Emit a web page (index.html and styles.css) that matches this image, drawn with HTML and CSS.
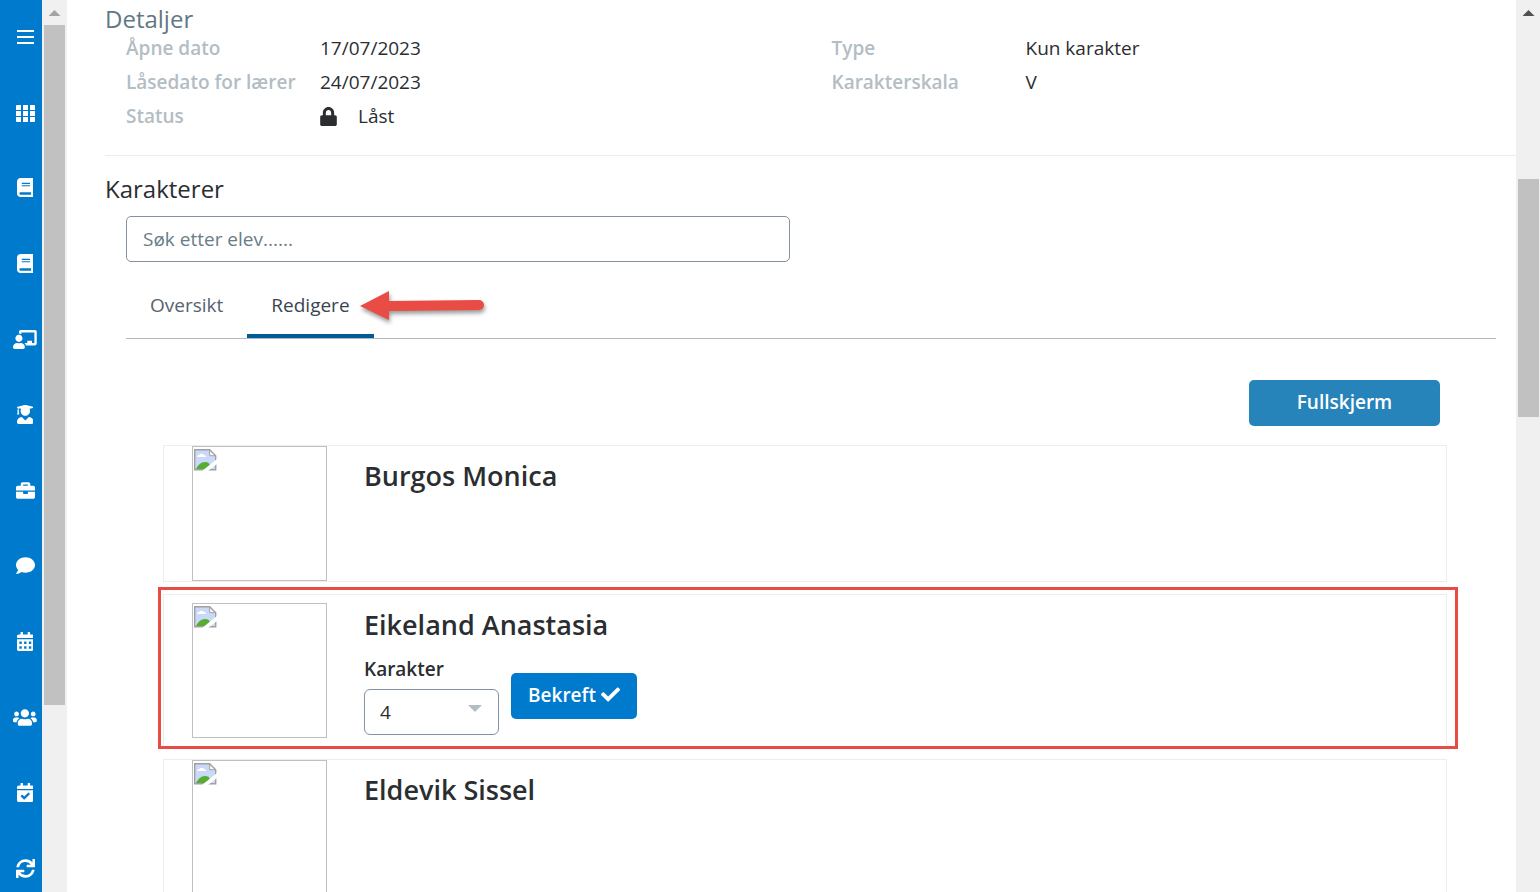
FILE: index.html
```
<!DOCTYPE html>
<html lang="no">
<head>
    <meta charset="UTF-8">
    <meta name="viewport" content="width=device-width, initial-scale=1.0">
    <title>Karakterer</title>
    <link rel="stylesheet" href="styles.css">
</head>
<body>
    <!-- Shared icons -->
    <svg class="sprite" aria-hidden="true">
        <symbol id="book" viewBox="0 0 448 512"><path d="M448 360V24c0-13.300-10.700-24-24-24H96C43 0 0 43 0 96v320c0 53 43 96 96 96h328c13.300 0 24-10.700 24-24v-16c0-7.500-3.500-14.300-8.900-18.700-4.200-15.400-4.200-59.300 0-74.700 5.400-4.300 8.900-11.100 8.900-18.600zM128 134c0-3.300 2.700-6 6-6h212c3.300 0 6 2.700 6 6v20c0 3.300-2.700 6-6 6H134c-3.300 0-6-2.700-6-6v-20zm0 64c0-3.300 2.700-6 6-6h212c3.300 0 6 2.700 6 6v20c0 3.300-2.700 6-6 6H134c-3.300 0-6-2.700-6-6v-20zm253.400 250H96c-17.700 0-32-14.300-32-32 0-17.600 14.400-32 32-32h285.400c-1.900 17.100-1.900 46.900 0 64z"/></symbol>
        <symbol id="missing" viewBox="0 0 24 24">
            <path d="M0.700 1.700h15l6 6v14h-21z" fill="#c9daf8"/>
            <path d="M3 9a2 2 0 0 1 2-2 3 3 0 0 1 5 0 2 2 0 0 1 2 2z" fill="#fff"/>
            <path d="M2 21c2-4 5-7 9-7 3 0 4 1 5 3l-3 4z" fill="#56ad32"/>
            <path d="M15.700 1.700v6h6" fill="#fff"/>
            <path d="M0.700 21.700v-20h15l6 6v14z" fill="none" stroke="#a0a0a0" stroke-width="1.400"/>
            <path d="M15.700 1.700v6h6" fill="none" stroke="#a0a0a0" stroke-width="1"/>
            <path d="M8 23 23 11v5l-9 7z" fill="#fff"/>
        </symbol>
    </svg>

    <div class="app">
        <nav class="sidebar" aria-label="Hovedmeny">
            <button type="button" aria-label="Meny"><svg viewBox="0 0 17 19"><path d="M0 3h17v2H0zM0 9h17v2H0zM0 15h17v2H0z"/></svg></button>
            <a href="#" aria-label="Oversikt"><svg viewBox="0 0 19 19"><path d="M1 2h4v5H0V3a1 1 0 0 1 1-1zM7 2h5v5H7zM14 2h4a1 1 0 0 1 1 1v4h-5zM0 8h5v5H0zM7 8h5v5H7zM14 8h5v5h-5zM0 14h5v5H1a1 1 0 0 1-1-1zM7 14h5v5H7zM14 14h5v4a1 1 0 0 1-1 1h-4z"/></svg></a>
            <a href="#" aria-label="Fag"><svg viewBox="0 0 448 512"><use href="#book"/></svg></a>
            <a href="#" aria-label="Bøker"><svg viewBox="0 0 448 512"><use href="#book"/></svg></a>
            <a href="#" aria-label="Undervisning"><svg viewBox="0 0 640 512"><path d="M208 352c-2.390 0-4.780.35-7.060 1.090C187.980 357.300 174.350 360 160 360c-14.350 0-27.980-2.700-40.950-6.910-2.280-.74-4.660-1.090-7.050-1.090C49.940 352-.33 402.480 0 464.620.14 490.880 21.730 512 48 512h224c26.270 0 47.860-21.120 48-47.380.33-62.140-49.940-112.620-112-112.620zm-48-32c53.020 0 96-42.980 96-96s-42.980-96-96-96-96 42.980-96 96 42.980 96 96 96zM592 0H208c-26.470 0-48 22.250-48 49.590V96c23.420 0 45.100 6.780 64 17.800V64h352v288h-64v-64H384v64h-76.240c19.100 16.690 33.120 38.730 39.690 64H592c26.470 0 48-22.250 48-49.590V49.590C640 22.250 618.470 0 592 0z"/></svg></a>
            <a href="#" aria-label="Elever"><svg viewBox="0 0 448 512"><path d="M319.400 320.600L224 416l-95.400-95.400C57.100 323.700 0 382.200 0 454.400v9.600c0 26.500 21.500 48 48 48h352c26.500 0 48-21.500 48-48v-9.600c0-72.200-57.100-130.700-128.600-133.800zM13.600 79.800l6.400 1.500v58.400c-7 4.200-12 11.500-12 20.300 0 8.400 4.600 15.400 11.100 19.700L3.500 242c-1.700 6.900 2.100 14 7.600 14h41.800c5.500 0 9.300-7.100 7.600-14l-15.600-62.300C51.400 175.400 56 168.400 56 160c0-8.800-5-16.100-12-20.300V87.100l66 15.900c-8.600 17.200-14 36.400-14 57 0 70.700 57.300 128 128 128s128-57.300 128-128c0-20.600-5.300-39.800-14-57l96.300-23.200c18.200-4.400 18.200-27.100 0-31.500l-190.400-46c-13-3.100-26.700-3.100-39.700 0L13.600 48.200c-18.100 4.400-18.100 27.200 0 31.600z"/></svg></a>
            <a href="#" aria-label="Arbeid"><svg viewBox="0 0 512 512"><path d="M320 336c0 8.840-7.160 16-16 16h-96c-8.840 0-16-7.160-16-16v-48H0v144c0 25.600 22.400 48 48 48h416c25.600 0 48-22.400 48-48V288H320v48zm144-208h-80V80c0-25.600-22.400-48-48-48H176c-25.600 0-48 22.400-48 48v48H48c-25.600 0-48 22.400-48 48v80h512v-80c0-25.600-22.400-48-48-48zm-144 0H192V96h128v32z"/></svg></a>
            <a href="#" aria-label="Meldinger"><svg viewBox="0 0 512 512"><path d="M256 32C114.600 32 0 125.100 0 240c0 49.600 21.400 95 57 130.700C44.500 421.100 2.700 466 2.200 466.500c-2.200 2.300-2.800 5.700-1.500 8.700S4.800 480 8 480c66.300 0 116-31.800 140.600-51.400 32.700 12.300 69 19.400 107.400 19.400 141.400 0 256-93.100 256-208S397.400 32 256 32z"/></svg></a>
            <a href="#" aria-label="Kalender"><svg viewBox="0 0 448 512"><path fill-rule="evenodd" d="M436 160H12c-7 0-12-5-12-12v-36c0-27 21-48 48-48h48V12c0-7 5-12 12-12h40c7 0 12 5 12 12v52h128V12c0-7 5-12 12-12h40c7 0 12 5 12 12v52h48c27 0 48 21 48 48v36c0 7-5 12-12 12zM12 192h424c7 0 12 5 12 12v260c0 27-21 48-48 48H48c-27 0-48-21-48-48V204c0-7 5-12 12-12zM64 256v64h64v-64zM192 256v64h64v-64zM320 256v64h64v-64zM64 384v64h64v-64zM192 384v64h64v-64zM320 384v64h64v-64z"/></svg></a>
            <a href="#" aria-label="Grupper"><svg viewBox="0 0 640 512"><path d="M96 224c35.300 0 64-28.700 64-64s-28.700-64-64-64-64 28.700-64 64 28.700 64 64 64zm448 0c35.300 0 64-28.700 64-64s-28.700-64-64-64-64 28.700-64 64 28.700 64 64 64zm32 32h-64c-17.600 0-33.500 7.100-45.100 18.600 40.300 22.100 68.900 62 75.100 109.400h66c17.700 0 32-14.300 32-32v-32c0-35.300-28.700-64-64-64zm-256 0c61.900 0 112-50.100 112-112S381.900 32 320 32 208 82.100 208 144s50.100 112 112 112zm76.800 32h-8.300c-20.800 10-43.900 16-68.500 16s-47.600-6-68.500-16h-8.300C179.600 288 128 339.600 128 403.200V432c0 26.500 21.500 48 48 48h288c26.500 0 48-21.500 48-48v-28.800c0-63.600-51.600-115.200-115.200-115.200zm-223.700-13.400C161.500 263.100 145.600 256 128 256H64c-35.300 0-64 28.700-64 64v32c0 17.700 14.300 32 32 32h65.900c6.300-47.400 34.900-87.300 75.200-109.400z"/></svg></a>
            <a href="#" aria-label="Fravær"><svg viewBox="0 0 448 512"><path d="M436 160H12c-6.627 0-12-5.373-12-12v-36c0-26.510 21.490-48 48-48h48V12c0-6.627 5.373-12 12-12h40c6.627 0 12 5.373 12 12v52h128V12c0-6.627 5.373-12 12-12h40c6.627 0 12 5.373 12 12v52h48c26.510 0 48 21.490 48 48v36c0 6.627-5.373 12-12 12zM12 192h424c6.627 0 12 5.373 12 12v260c0 26.510-21.490 48-48 48H48c-26.510 0-48-21.490-48-48V204c0-6.627 5.373-12 12-12zm333.296 95.947l-28.169-28.398c-4.667-4.705-12.265-4.736-16.970-.068L194.120 364.665l-45.980-46.352c-4.667-4.705-12.266-4.736-16.971-.068l-28.397 28.170c-4.705 4.667-4.736 12.265-.068 16.970l82.601 83.269c4.667 4.705 12.265 4.736 16.970.068l142.953-141.805c4.705-4.667 4.736-12.265.068-16.970z"/></svg></a>
            <a href="#" aria-label="Oppdater"><svg viewBox="0 0 512 512"><path d="M440.650 12.570l4 82.770A247.160 247.160 0 0 0 255.830 8C134.730 8 33.910 94.920 12.290 209.820A12 12 0 0 0 24.090 224h49.050a12 12 0 0 0 11.670-9.260 175.910 175.910 0 0 1 317-56.940l-101.460-4.860a12 12 0 0 0-12.570 12v47.410a12 12 0 0 0 12 12H500a12 12 0 0 0 12-12V12a12 12 0 0 0-12-12h-47.370a12 12 0 0 0-11.980 12.570zM255.830 432a175.610 175.610 0 0 1-146-77.800l101.800 4.870a12 12 0 0 0 12.570-12v-47.400a12 12 0 0 0-12-12H12a12 12 0 0 0-12 12V500a12 12 0 0 0 12 12h47.350a12 12 0 0 0 12-12.600l-4.150-82.570A247.170 247.170 0 0 0 255.830 504c121.110 0 221.930-86.920 243.550-201.820a12 12 0 0 0-11.800-14.180h-49.050a12 12 0 0 0-11.670 9.260A175.860 175.860 0 0 1 255.830 432z"/></svg></a>
        </nav>

        <div class="scrollbar scrollbar-menu" aria-hidden="true">
            <div class="scroll-arrow"></div>
            <div class="scroll-thumb"></div>
        </div>

        <main class="content">
            <section class="details">
                <h2>Detaljer</h2>
                <div class="detail-columns">
                    <dl>
                        <dt>Åpne dato</dt>
                        <dd>17/07/2023</dd>
                        <dt>Låsedato for lærer</dt>
                        <dd>24/07/2023</dd>
                        <dt>Status</dt>
                        <dd class="status">
                            <svg viewBox="0 0 448 512"><path d="M400 224h-24v-72C376 68.200 307.800 0 224 0S72 68.200 72 152v72H48c-26.500 0-48 21.500-48 48v192c0 26.500 21.500 48 48 48h352c26.500 0 48-21.500 48-48V272c0-26.500-21.500-48-48-48zm-104 0H152v-72c0-39.700 32.300-72 72-72s72 32.300 72 72v72z"/></svg>
                            Låst
                        </dd>
                    </dl>
                    <dl>
                        <dt>Type</dt>
                        <dd>Kun karakter</dd>
                        <dt>Karakterskala</dt>
                        <dd>V</dd>
                    </dl>
                </div>
            </section>

            <section class="grades">
                <h2>Karakterer</h2>
                <div class="grades-body">
                    <input class="search" type="text" placeholder="Søk etter elev......" aria-label="Søk etter elev">

                    <div class="tabs" role="tablist">
                        <button class="tab" type="button" role="tab" aria-selected="false">Oversikt</button>
                        <button class="tab active" type="button" role="tab" aria-selected="true">Redigere</button>
                        <svg class="pointer" viewBox="0 0 124 32" aria-hidden="true"><path d="M0 16 29 1v10l90-1a5 5 0 0 1 0 10l-90 1v9z"/></svg>
                    </div>

                    <div class="panel">
                        <button class="btn btn-fullscreen" type="button">Fullskjerm</button>

                        <article class="student">
                            <div class="photo"><svg><use href="#missing"/></svg></div>
                            <div class="student-info">
                                <h3>Burgos Monica</h3>
                            </div>
                        </article>

                        <article class="student highlighted">
                            <div class="photo"><svg><use href="#missing"/></svg></div>
                            <div class="student-info">
                                <h3>Eikeland Anastasia</h3>
                                <form class="grade-form">
                                    <div class="field">
                                        <label for="grade">Karakter</label>
                                        <div class="select-wrap">
                                            <select id="grade">
                                                <option>1</option>
                                                <option>2</option>
                                                <option>3</option>
                                                <option selected>4</option>
                                                <option>5</option>
                                                <option>6</option>
                                            </select>
                                        </div>
                                    </div>
                                    <button class="btn btn-confirm" type="button">Bekreft
                                        <svg viewBox="0 0 512 512"><path d="M173.898 439.404l-166.400-166.400c-9.997-9.997-9.997-26.206 0-36.204l36.203-36.204c9.997-9.998 26.207-9.998 36.204 0L192 312.690 432.095 72.596c9.997-9.997 26.207-9.997 36.204 0l36.203 36.204c9.997 9.997 9.997 26.206 0 36.204l-294.400 294.401c-9.998 9.997-26.207 9.997-36.204-.001z"/></svg>
                                    </button>
                                </form>
                            </div>
                        </article>

                        <article class="student">
                            <div class="photo"><svg><use href="#missing"/></svg></div>
                            <div class="student-info">
                                <h3>Eldevik Sissel</h3>
                            </div>
                        </article>
                    </div>
                </div>
            </section>
        </main>

        <div class="scrollbar scrollbar-page" aria-hidden="true">
            <div class="scroll-arrow"></div>
            <div class="scroll-thumb"></div>
        </div>
    </div>
</body>
</html>
```
FILE: styles.css
```
* {
    margin: 0;
    padding: 0;
    box-sizing: border-box;
}

body {
    font-family: 'Open Sans', sans-serif;
    font-size: 19px;
    line-height: 26px;
    color: #2b2e31;
    background: #fff;
}

button,
input,
select {
    font: inherit;
    color: inherit;
}

button {
    border: none;
    background: none;
    cursor: pointer;
}

.sprite {
    display: none;
}

.app {
    display: flex;
    height: 100vh;
    overflow: hidden;
}

/* Blue icon menu */
.sidebar {
    flex: 0 0 42px;
    display: flex;
    flex-direction: column;
    align-items: center;
    justify-content: space-between;
    padding: 27px 0 14px 8px;
    background: #007acc;
}

.sidebar a,
.sidebar button {
    display: flex;
}

.sidebar svg {
    display: block;
    width: auto;
    height: 19px;
    fill: #fff;
}

/* Scrollbars */
.scrollbar {
    flex: 0 0 24px;
    padding: 0 1px 0 2px;
    background: #f0f0f0;
}

.scrollbar-menu {
    flex-basis: 25px;
    padding-right: 2px;
}

.scroll-arrow {
    height: 25px;
    padding-top: 10px;
}

.scroll-arrow::before {
    content: '';
    display: block;
    width: 12px;
    height: 6px;
    margin: 0 auto;
    background: #505050;
    clip-path: polygon(50% 0, 100% 100%, 0 100%);
}

.scrollbar-menu .scroll-arrow::before {
    background: #a3a3a3;
}

.scroll-thumb {
    background: #c1c1c1;
    height: 680px;
}

.scrollbar-page .scroll-thumb {
    height: 238px;
    margin-top: 154px;
}

/* Main content */
.content {
    flex: 1;
    min-width: 0;
    padding-left: 38px;
    overflow: hidden;
}

h2 {
    font-size: 24px;
    line-height: 24px;
    font-weight: 400;
}

.details {
    padding: 7px 0 22px;
    border-bottom: 1px solid #ececec;
}

.details h2 {
    color: #627884;
}

.detail-columns {
    display: grid;
    grid-template-columns: 1fr 1fr;
}

.detail-columns dl {
    display: grid;
    grid-template-columns: 194px 1fr;
    align-content: start;
    padding-left: 21px;
    line-height: 34px;
}

.detail-columns dt {
    font-weight: 600;
    color: #b3bdc4;
}

.status {
    display: flex;
    align-items: center;
    gap: 21px;
}

.status svg {
    width: 17px;
    height: 19px;
    fill: #2b2e31;
}

.grades {
    padding-top: 21px;
}

.grades-body {
    padding: 15px 20px 0 21px;
}

.search {
    display: block;
    width: 664px;
    max-width: 100%;
    height: 46px;
    padding: 0 16px;
    border: 1px solid #8592a0;
    border-radius: 5px;
    background: #fff;
}

.search::placeholder {
    color: #687c87;
    opacity: 1;
}

.tabs {
    position: relative;
    display: flex;
    margin-top: 10px;
    border-bottom: 1px solid #b0b8c1;
}

.tab {
    padding: 20px 24px 16px;
    border-bottom: 4px solid transparent;
    color: #566370;
}

.tab.active {
    border-bottom-color: #005b99;
    color: #3a444e;
}

/* Red arrow next to the active tab */
.pointer {
    position: absolute;
    top: 18px;
    left: 234px;
    width: 124px;
    height: 32px;
    overflow: visible;
    fill: #e84c45;
    filter: drop-shadow(1px 3px 2px rgba(0, 0, 0, 0.4));
}

.panel {
    display: flex;
    flex-direction: column;
    gap: 12px;
    padding: 41px 49px 0 37px;
}

.btn {
    height: 46px;
    padding-bottom: 2px;
    border-radius: 5px;
    color: #fff;
    font-weight: 600;
}

.btn-fullscreen {
    align-self: flex-end;
    width: 191px;
    margin: 0 7px 7px 0;
    background: #2684ba;
}

.student {
    position: relative;
    display: flex;
    gap: 37px;
    padding-left: 28px;
    border: 1px solid #ededed;
}

.photo {
    flex: none;
    align-self: center;
    width: 135px;
    height: 135px;
    padding: 1px;
    border: 1px solid #c0c0c0;
}

.photo svg {
    display: block;
    width: 24px;
    height: 24px;
}

.student-info {
    padding-top: 12px;
}

h3 {
    font-size: 27px;
    line-height: 36px;
    font-weight: 600;
}

.highlighted {
    padding-top: 8px;
    padding-bottom: 8px;
}

.highlighted .student-info {
    padding-top: 4px;
}

/* Red frame around the student being graded */
.highlighted::after {
    content: '';
    position: absolute;
    top: -8px;
    right: -12px;
    bottom: -3px;
    left: -6px;
    border: 3px solid #e84c45;
    pointer-events: none;
}

.grade-form {
    display: flex;
    align-items: center;
    gap: 12px;
    margin-top: 13px;
}

.field label {
    display: block;
    margin-bottom: 7px;
    font-weight: 600;
}

.select-wrap {
    position: relative;
    width: 135px;
}

.select-wrap::after {
    content: '';
    position: absolute;
    top: 16px;
    right: 17px;
    width: 14px;
    height: 7px;
    background: #b3bdc4;
    clip-path: polygon(0 0, 100% 0, 50% 100%);
    pointer-events: none;
}

select {
    display: block;
    width: 100%;
    height: 46px;
    padding: 0 15px;
    border: 1px solid #8592a0;
    border-radius: 6px;
    background: #fff;
    appearance: none;
}

.btn-confirm {
    display: flex;
    align-items: center;
    justify-content: center;
    gap: 5px;
    width: 126px;
    background: #007acc;
}

.btn-confirm svg {
    width: 19px;
    height: 19px;
    fill: #fff;
}
```
